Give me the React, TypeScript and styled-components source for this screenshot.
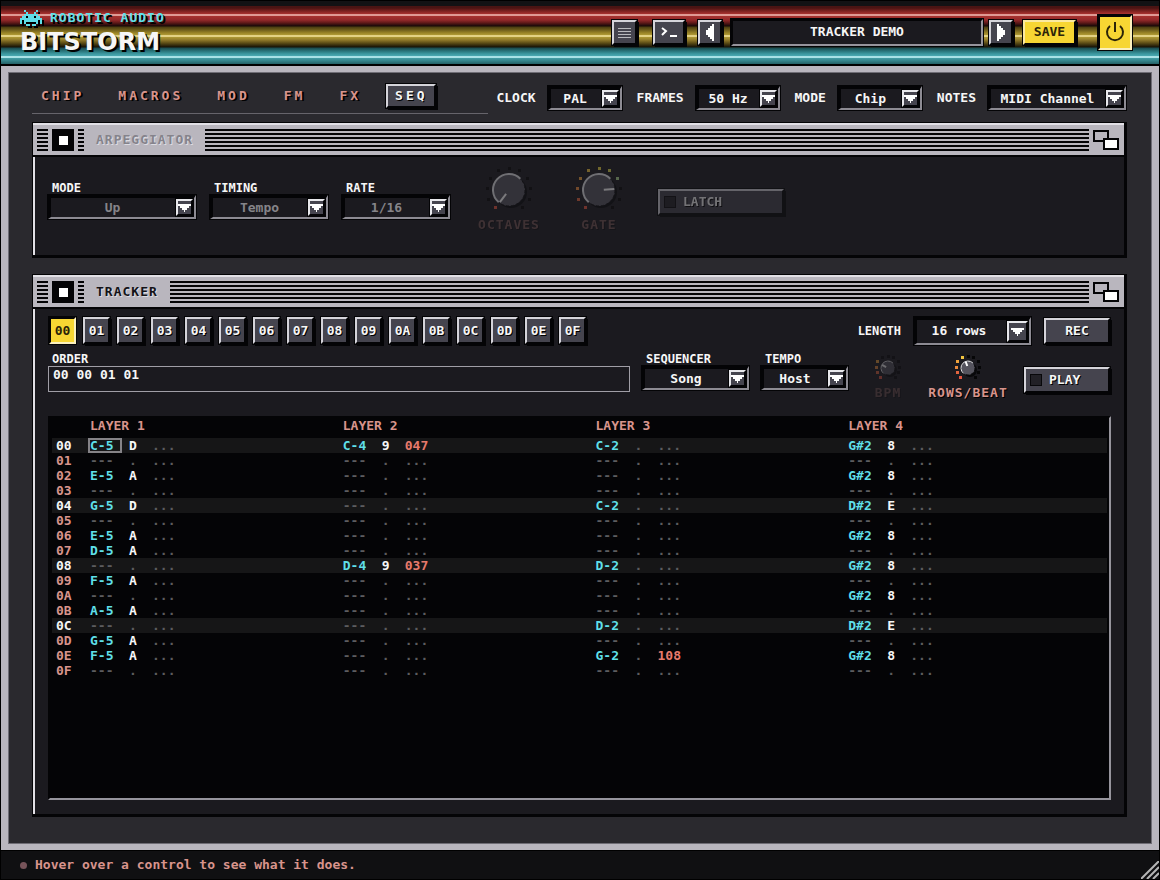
import React from "react";
import styled, { createGlobalStyle, css } from "styled-components";

const c = {
  black: "#040406",
  page: "#2a292e",
  panel: "#1b1a1f",
  chrome: "#b9b6be",
  chromeLight: "#e2e0e6",
  chromeDark: "#85838b",
  key: "#45444e",
  yellow: "#f7d633",
  pink: "#d8948c",
  cyan: "#5fdfe8",
  red: "#e77a6c",
  white: "#f6f6f6",
};

const GlobalStyle = createGlobalStyle`
  * { box-sizing: border-box; }
  html, body { margin: 0; background: #000; }
  body, button, select, textarea, input {
    font-family: "DejaVu Sans Mono", "Liberation Mono", monospace;
    font-weight: 700;
    font-size: 13px;
    line-height: 16px;
    color: ${c.white};
  }
`;

const Shell = styled.div`
  min-height: 100vh;
  display: flex;
  flex-direction: column;
  padding: 0 1px;
  background: #000;
`;

const Header = styled.header`
  height: 66px;
  display: flex;
  justify-content: space-between;
  padding: 0 27px 0 19px;
  border-bottom: 2px solid #000;
  background: linear-gradient(
    #000 0 1px, #121214 1px 6px,
    #4a1413 6px 8px, #6d1d1b 10px, #8c2725 12px, #a8322f 14px, #e09a94 14px 16px, #a8322f 16px, #93292a 20px, #5c1817 23px, #160808 26px,
    #4a3c10 27px, #6f5e1b 30px, #9b8527 33px, #b09a35 35px, #e3d183 35px 37px, #b09a35 37px, #90792a 40px, #5d4d16 43px, #171206 47px,
    #1a4b50 48px, #297479 51px, #3d9aa2 54px, #4aa9b1 56px, #a9e2e6 56px 58px, #459fa7 58px, #348288 61px, #246065 64px
  );
`;

const Brand = styled.div`
  display: flex;
  flex-direction: column;
  padding-top: 10px;
`;

const Maker = styled.div`
  display: flex;
  gap: 8px;
  height: 18px;
  color: ${c.cyan};
  letter-spacing: 1px;
  text-shadow: 2px 2px #000;

  svg { filter: drop-shadow(2px 2px #000); }
`;

const ProductName = styled.h1`
  margin: 0;
  font: 700 24px/28px "DejaVu Sans", "Liberation Sans", sans-serif;
  text-shadow: 2px 2px #000;
`;

const HeaderTools = styled.div`
  display: flex;
  align-items: center;
`;

const raised = css`
  border: 2px solid;
  border-color: #d5d4da ${c.black} ${c.black} #d5d4da;
  box-shadow: 0 0 0 1px ${c.black}, 2px 2px ${c.black};
  background: ${c.key};
  color: ${c.white};
  text-shadow: 1px 1px #000;
`;

const ToolKey = styled.button<{ $w: number; $gap?: number }>`
  ${raised}
  width: ${(p) => p.$w}px;
  height: 25px;
  margin-right: ${(p) => p.$gap ?? 6}px;
  padding: 0;
  display: flex;
  align-items: center;
  justify-content: center;
`;

const PresetName = styled.button`
  width: 252px;
  height: 27px;
  margin-right: 6px;
  padding: 0;
  border: 2px solid;
  border-color: ${c.black} #96949c #96949c ${c.black};
  box-shadow: 0 0 0 1px ${c.black};
  background: ${c.panel};
`;

const SaveKey = styled(ToolKey)`
  background: ${c.yellow};
  border-color: #fbe9a0 ${c.black} ${c.black} #fbe9a0;
  color: #2b2408;
  text-shadow: none;
`;

const PowerKey = styled.button`
  width: 34px;
  height: 35px;
  padding: 0;
  display: grid;
  place-items: center;
  border: 2px solid;
  border-color: ${c.black} #fbf0bd #fbf0bd ${c.black};
  box-shadow: 0 0 0 1px ${c.black};
  background: ${c.yellow};
`;

const Main = styled.main`
  flex: 1;
  display: flex;
  flex-direction: column;
  padding: 12px 25px 27px 24px;
  border: solid ${c.chrome};
  border-width: 6px 7px;
  box-shadow: inset 0 0 0 1px #6f6d75;
  background: ${c.page};
`;

const TopBar = styled.div`
  display: flex;
  justify-content: space-between;
  align-items: flex-start;
  height: 38px;
`;

const TabList = styled.nav`
  display: flex;
  align-items: flex-start;
  gap: 17px;
  width: 456px;
  height: 30px;
  border-bottom: 1px solid #66646b;
`;

const Tab = styled.button<{ $active?: boolean }>`
  padding: 2px 6px 4px 7px;
  height: 24px;
  border: 2px solid transparent;
  background: none;
  color: ${c.pink};
  letter-spacing: 3px;
  text-shadow: 2px 1px #000;
  ${(p) => p.$active && raised}
`;

const Settings = styled.div`
  display: flex;
  gap: 15px;
  padding: 2px 1px 0 0;
`;

const InlineField = styled.div`
  display: flex;
  align-items: center;
  gap: 12px;
`;

const Field = styled.div`
  display: flex;
  flex-direction: column;
`;

const Label = styled.label<{ $small?: boolean }>`
  font-size: ${(p) => (p.$small ? 12 : 13)}px;
  line-height: 14px;
`;

const FieldLabel = styled(Label)`
  padding-left: 4px;
`;

const SelectFrame = styled.div<{ $w: number; $tall?: boolean }>`
  display: grid;
  align-items: center;
  width: ${(p) => p.$w}px;
  height: ${(p) => (p.$tall ? 28 : 24)}px;
  border: solid;
  border-width: 3px 2px 2px 3px;
  border-color: ${c.black} #8d8b93 #8d8b93 ${c.black};
  box-shadow: 0 0 0 1px ${c.black};
  background: ${c.panel};

  > * { grid-area: 1 / 1; }
`;

const NativeSelect = styled.select<{ $dim?: boolean; $tall?: boolean }>`
  appearance: none;
  width: 100%;
  height: 100%;
  padding: 0 ${(p) => (p.$tall ? 28 : 20)}px 0 0;
  border: 0;
  background: transparent;
  opacity: 1;
  color: ${(p) => (p.$dim ? "#858489" : c.white)};
  text-align-last: center;
`;

const DropKey = styled.span<{ $tall?: boolean }>`
  justify-self: end;
  width: ${(p) => (p.$tall ? 21 : 17)}px;
  height: ${(p) => (p.$tall ? 21 : 17)}px;
  margin-right: 1px;
  display: grid;
  place-items: center;
  border: 2px solid;
  border-color: #e8e8ec ${c.black} ${c.black} #e8e8ec;
  box-shadow: 0 0 0 1px ${c.black};
  background: ${c.key};
  pointer-events: none;
`;

function Select({ id, value, w, tall, dim }: {
  id: string; value: string; w: number; tall?: boolean; dim?: boolean;
}) {
  return (
    <SelectFrame $w={w} $tall={tall}>
      <NativeSelect id={id} disabled={dim} $dim={dim} $tall={tall} defaultValue={value}>
        <option>{value}</option>
      </NativeSelect>
      <DropKey $tall={tall}>
        <svg width="13" height="13" viewBox="0 0 13 13" fill="#fff" shapeRendering="crispEdges">
          <path d="M0 3h13v2h-2v2h-2v2h-2v2H6V9H4V7H2V5H0z" />
        </svg>
      </DropKey>
    </SelectFrame>
  );
}

const Panel = styled.section<{ $grow?: boolean }>`
  display: flex;
  flex-direction: column;
  ${(p) => (p.$grow ? "flex: 1; margin-top: 16px;" : "height: 136px;")}
  border: solid;
  border-width: 1px 3px 3px 1px;
  border-color: ${c.black};
  background: ${c.panel};
`;

const TitleBar = styled.div`
  display: flex;
  align-items: center;
  gap: 4px;
  height: 34px;
  padding: 0 5px 0 4px;
  border-top: 2px solid ${c.chromeLight};
  border-bottom: 2px solid ${c.black};
  background: ${c.chrome};
`;

const Stripes = styled.span<{ $w?: number }>`
  ${(p) => (p.$w ? `width: ${p.$w}px;` : "flex: 1;")}
  height: 22px;
  background: repeating-linear-gradient(${c.black} 0 2px, ${c.chrome} 2px 4px);
`;

const CloseBox = styled.button`
  width: 22px;
  height: 22px;
  padding: 0;
  border: solid ${c.black};
  border-width: 7px 6px 6px 7px;
  background: #fff;
`;

const PanelTitle = styled.h2<{ $dim?: boolean }>`
  margin: 0;
  padding: 0 8px;
  font-size: 13px;
  line-height: 20px;
  letter-spacing: 1px;
  color: ${(p) => (p.$dim ? "#85838b" : "#141318")};
  text-shadow: 1px 1px #dddce2;
`;

const WindowKey = styled.button`
  width: 26px;
  height: 22px;
  padding: 0;
  border: 0;
  background: none;
`;

const PanelBody = styled.div`
  flex: 1;
  display: flex;
  flex-direction: column;
  padding: 7px 13px 14px;
  border-left: 2px solid ${c.chromeLight};
`;

function Bar({ title, dim }: { title: string; dim?: boolean }) {
  return (
    <TitleBar>
      <Stripes $w={11} />
      <CloseBox aria-label={`Toggle ${title}`} />
      <Stripes $w={6} />
      <PanelTitle $dim={dim}>{title}</PanelTitle>
      <Stripes />
      <WindowKey aria-label={`Resize ${title}`}>
        <svg width="26" height="22" viewBox="0 0 26 22" shapeRendering="crispEdges">
          <rect x="1" y="2" width="14" height="10" fill={c.chrome} stroke="#040406" strokeWidth="2" />
          <rect x="11" y="10" width="14" height="10" fill="#fff" stroke="#040406" strokeWidth="2" />
        </svg>
      </WindowKey>
    </TitleBar>
  );
}

const ArpRow = styled.div`
  display: flex;
  gap: 14px;
  padding-top: 17px;
  align-items: flex-start;
`;

const ArpKnobs = styled.div`
  display: flex;
  margin-top: -17px;
`;

const KnobBox = styled.div<{ $w: number; $opacity?: number }>`
  width: ${(p) => p.$w}px;
  display: flex;
  flex-direction: column;
  align-items: center;
  gap: 1px;
  opacity: ${(p) => p.$opacity ?? 1};
`;

const KnobLabel = styled.span<{ $faint?: boolean }>`
  line-height: 16px;
  letter-spacing: 1px;
  color: ${c.pink};
  opacity: ${(p) => (p.$faint ? 0.45 : 1)};
  text-shadow: 1px 1px #000;
`;

const dotColors = ["#e2553f", "#e2643f", "#ea8a3c", "#efa23c", "#f2c440", "#e5d040", "#d8d44a", "#a9d08a", "#7fc98f", "#6fc9b5", "#5fdfe8"];

function polar(r: number, deg: number, mid: number) {
  const a = (deg * Math.PI) / 180;
  return [mid + r * Math.sin(a), mid - r * Math.cos(a)];
}

function Knob({ size, r, dotR, dot, value, lit, unlit = "#060607" }: {
  size: number; r: number; dotR: number; dot: number; value: number; lit: number; unlit?: string;
}) {
  const m = size / 2;
  const [ax, ay] = polar(r, -140, m);
  const [bx, by] = polar(r, 45, m);
  const turn = value * 286 - 143;
  const [px, py] = polar(r * 0.3, turn, m);
  const [qx, qy] = polar(r * 0.95, turn, m);
  return (
    <svg width={size} height={size} viewBox={`0 0 ${size} ${size}`}>
      {dotColors.map((color, i) => {
        const [x, y] = polar(dotR, i * 28.6 - 143, m);
        return (
          <rect
            key={color}
            x={Math.round(x - dot / 2)}
            y={Math.round(y - dot / 2)}
            width={dot}
            height={dot}
            fill={i < lit ? color : unlit}
          />
        );
      })}
      <circle cx={m + 2} cy={m + 2} r={r} fill="#08080a" />
      <circle cx={m} cy={m} r={r} fill="#55545e" stroke="#0b0b0d" strokeDasharray="3 2" />
      <path d={`M${ax} ${ay}A${r} ${r} 0 1 1 ${bx} ${by}`} fill="none" stroke="#e4e4e8" strokeWidth={r > 10 ? 2 : 1} />
      <path d={`M${px} ${py}L${qx} ${qy}`} stroke="#fff" strokeWidth="2" />
    </svg>
  );
}

const Toggle = styled.label<{ $w: number; $dim?: boolean }>`
  ${raised}
  display: flex;
  align-items: center;
  gap: 7px;
  width: ${(p) => p.$w}px;
  height: 26px;
  padding-left: 4px;
  ${(p) => p.$dim && "opacity: 0.4;"}
`;

const TickBox = styled.input`
  appearance: none;
  width: 12px;
  height: 12px;
  margin: 0;
  border: 1px solid #08080a;
  background: #222126;
`;

const LatchSlot = styled.div`
  padding-top: 8px;
`;

const Row = styled.div`
  display: flex;
  justify-content: space-between;
`;

const PatternKeys = styled.div`
  display: flex;
  gap: 7px;
  padding: 1px;
`;

const PatternKey = styled.button<{ $active?: boolean }>`
  ${raised}
  width: 27px;
  height: 27px;
  padding: 0;
  ${(p) => p.$active && css`
    background: ${c.yellow};
    border-color: ${c.black} #fbf0bd #fbf0bd ${c.black};
    box-shadow: 0 0 0 1px ${c.black};
    color: #2b2408;
    text-shadow: none;
  `}
`;

const LengthTools = styled.div`
  display: flex;
  align-items: center;
  gap: 13px;
`;

const RecKey = styled.button`
  ${raised}
  width: 66px;
  height: 26px;
  margin-right: 1px;
  padding: 0;
`;

const OrderRow = styled.div`
  display: flex;
  gap: 12px;
  padding-top: 7px;
  height: 71px;
`;

const OrderField = styled(Field)`
  flex: 1;
`;

const OrderInput = styled.textarea`
  display: block;
  width: 100%;
  height: 26px;
  padding: 0 4px;
  resize: none;
  overflow: hidden;
  border: 1px solid #a09ea6;
  background: ${c.panel};
`;

const PlaySlot = styled.div`
  padding: 15px 1px 0 4px;
`;

const GridWell = styled.div`
  flex: 1;
  padding: 0 2px;
  border: 2px solid;
  border-color: ${c.black} #96949c #96949c ${c.black};
  background: ${c.black};
`;

const PatternTable = styled.table`
  width: 100%;
  table-layout: fixed;
  border-collapse: collapse;

  th, td { padding: 0; text-align: left; white-space: nowrap; line-height: 15px; height: 15px; }
  thead th { height: 20px; padding-left: 2px; vertical-align: top; color: ${c.pink}; }
`;

const Step = styled.tr<{ $beat: boolean }>`
  background: ${(p) => (p.$beat ? "#161617" : "transparent")};

  th { padding-left: 4px; color: ${(p) => (p.$beat ? c.white : c.pink)}; }
`;

const Cell = styled.td<{ $color: string; $empty: boolean; $cursor?: boolean }>`
  color: ${(p) => (p.$empty ? "#5c5c5f" : p.$color)};

  span {
    display: block;
    width: 34px;
    height: 15px;
    padding-left: 2px;
    line-height: 15px;
    ${(p) => p.$cursor && "outline: 2px solid #858387; outline-offset: -2px;"}
  }
`;

const Footer = styled.footer`
  display: flex;
  justify-content: space-between;
  align-items: center;
  height: 30px;
  padding-left: 19px;
  border: solid #000;
  border-width: 1px 0;
  background: #101012;
  color: ${c.pink};
`;

const Hint = styled.div`
  display: flex;
  align-items: center;
  gap: 8px;

  &::before { content: ""; width: 7px; height: 7px; border-radius: 50%; background: #77545a; }
`;

const Grip = styled.svg`
  align-self: flex-end;
`;

const invader = ["..#.....#..", "...#...#...", "..#######..", ".##.###.##.", "###########", "#.#######.#", "#.#.....#.#", "...##.##..."];

type Entry = [note?: string, instrument?: string, effect?: string];
const layers: Record<number, Entry>[] = [
  { 0: ["C-5", "D"], 2: ["E-5", "A"], 4: ["G-5", "D"], 6: ["E-5", "A"], 7: ["D-5", "A"], 9: ["F-5", "A"], 11: ["A-5", "A"], 13: ["G-5", "A"], 14: ["F-5", "A"] },
  { 0: ["C-4", "9", "047"], 8: ["D-4", "9", "037"] },
  { 0: ["C-2"], 4: ["C-2"], 8: ["D-2"], 12: ["D-2"], 14: ["G-2", undefined, "108"] },
  { 0: ["G#2", "8"], 2: ["G#2", "8"], 4: ["D#2", "E"], 6: ["G#2", "8"], 8: ["G#2", "8"], 10: ["G#2", "8"], 12: ["D#2", "E"], 14: ["G#2", "8"] },
];
const hex = Array.from({ length: 16 }, (_, i) => "0" + i.toString(16).toUpperCase());

const RowNumberCol = styled.col`width: 36px;`;
const NoteCol = styled.col`width: 39px;`;
const InstrumentCol = styled.col`width: 23px;`;
const EndCol = styled.col`width: 8px;`;

function Pattern() {
  return (
    <PatternTable>
      <colgroup>
        <RowNumberCol />
        {layers.map((_, i) => (
          <React.Fragment key={i}>
            <NoteCol />
            <InstrumentCol />
            <col />
          </React.Fragment>
        ))}
        <EndCol />
      </colgroup>
      <thead>
        <tr>
          <td />
          {layers.map((_, i) => <th key={i} colSpan={3}>LAYER {i + 1}</th>)}
          <td />
        </tr>
      </thead>
      <tbody>
        {hex.map((row, r) => (
          <Step key={row} $beat={r % 4 === 0}>
            <th scope="row">{row}</th>
            {layers.map((layer, i) => {
              const [note, inst, fx] = layer[r] ?? [];
              return (
                <React.Fragment key={i}>
                  <Cell $color={c.cyan} $empty={!note} $cursor={r === 0 && i === 0}><span>{note ?? "---"}</span></Cell>
                  <Cell $color={c.white} $empty={!inst}><span>{inst ?? "."}</span></Cell>
                  <Cell $color={c.red} $empty={!fx}><span>{fx ?? "..."}</span></Cell>
                </React.Fragment>
              );
            })}
            <td />
          </Step>
        ))}
      </tbody>
    </PatternTable>
  );
}

export default function App() {
  return (
    <Shell>
      <GlobalStyle />
      <Header>
        <Brand>
          <Maker>
            <svg width="22" height="16" viewBox="0 0 11 8" fill={c.cyan} shapeRendering="crispEdges">
              {invader.flatMap((line, y) => [...line].map((p, x) => p === "#" && <rect key={`${x}-${y}`} x={x} y={y} width="1" height="1" />))}
            </svg>
            <span>ROBOTIC AUDIO</span>
          </Maker>
          <ProductName>BITSTORM</ProductName>
        </Brand>
        <HeaderTools>
          <ToolKey $w={25} $gap={16} aria-label="Menu">
            <svg width="13" height="13" viewBox="0 0 13 13" fill="#b9b9bd" shapeRendering="crispEdges">
              <path d="M0 2h13v1H0zM0 5h13v1H0zM0 8h13v1H0zM0 11h13v1H0z" />
            </svg>
          </ToolKey>
          <ToolKey $w={32} $gap={13} aria-label="Console">
            <svg width="17" height="12" viewBox="0 0 17 12" fill="none" stroke="#fff" strokeWidth="2">
              <path d="M1 2l4 3-4 4M9 10h7" />
            </svg>
          </ToolKey>
          <ToolKey $w={24} $gap={9} aria-label="Previous preset">
            <svg width="8" height="17" viewBox="0 0 8 17" fill="#fff" shapeRendering="crispEdges">
              <path d="M8 0v17H6v-2H4v-2H2v-2H0V6h2V4h2V2h2V0z" />
            </svg>
          </ToolKey>
          <PresetName>TRACKER DEMO</PresetName>
          <ToolKey $w={24} $gap={10} aria-label="Next preset">
            <svg width="8" height="17" viewBox="0 0 8 17" fill="#fff" shapeRendering="crispEdges">
              <path d="M0 0v17h2v-2h2v-2h2v-2h2V6H6V4H4V2H2V0z" />
            </svg>
          </ToolKey>
          <SaveKey $w={53} $gap={22}>SAVE</SaveKey>
          <PowerKey aria-label="Power">
            <svg width="22" height="22" viewBox="0 0 22 22" fill="none" stroke="#2b2408" strokeWidth="2">
              <path d="M6 5a8 8 0 1 0 10 0M11 1v10" />
            </svg>
          </PowerKey>
        </HeaderTools>
      </Header>

      <Main>
        <TopBar>
          <TabList>
            {["CHIP", "MACROS", "MOD", "FM", "FX", "SEQ"].map((t) => <Tab key={t} $active={t === "SEQ"}>{t}</Tab>)}
          </TabList>
          <Settings>
            <InlineField><Label htmlFor="clock">CLOCK</Label><Select id="clock" value="PAL" w={74} /></InlineField>
            <InlineField><Label htmlFor="frames">FRAMES</Label><Select id="frames" value="50 Hz" w={84} /></InlineField>
            <InlineField><Label htmlFor="chipmode">MODE</Label><Select id="chipmode" value="Chip" w={84} /></InlineField>
            <InlineField><Label htmlFor="notes">NOTES</Label><Select id="notes" value="MIDI Channel" w={138} /></InlineField>
          </Settings>
        </TopBar>

        <Panel>
          <Bar title="ARPEGGIATOR" dim />
          <PanelBody>
            <ArpRow>
              <Field><FieldLabel $small htmlFor="arpmode">MODE</FieldLabel><Select id="arpmode" value="Up" w={148} dim /></Field>
              <Field><FieldLabel $small htmlFor="timing">TIMING</FieldLabel><Select id="timing" value="Tempo" w={118} dim /></Field>
              <Field><FieldLabel $small htmlFor="rate">RATE</FieldLabel><Select id="rate" value="1/16" w={108} dim /></Field>
              <ArpKnobs>
                <KnobBox $w={90} $opacity={0.42}>
                  <Knob size={52} r={16} dotR={22} dot={3} value={0} lit={1} />
                  <KnobLabel $faint>OCTAVES</KnobLabel>
                </KnobBox>
                <KnobBox $w={90} $opacity={0.42}>
                  <Knob size={52} r={16} dotR={22} dot={3} value={0.8} lit={8} />
                  <KnobLabel $faint>GATE</KnobLabel>
                </KnobBox>
              </ArpKnobs>
              <LatchSlot>
                <Toggle $w={126} $dim><TickBox type="checkbox" disabled />LATCH</Toggle>
              </LatchSlot>
            </ArpRow>
          </PanelBody>
        </Panel>

        <Panel $grow>
          <Bar title="TRACKER" />
          <PanelBody>
            <Row>
              <PatternKeys>
                {hex.map((h, i) => <PatternKey key={h} $active={i === 0}>{h}</PatternKey>)}
              </PatternKeys>
              <LengthTools>
                <Label $small htmlFor="length">LENGTH</Label>
                <Select id="length" value="16 rows" w={117} tall />
                <RecKey>REC</RecKey>
              </LengthTools>
            </Row>
            <OrderRow>
              <OrderField>
                <FieldLabel $small htmlFor="order">ORDER</FieldLabel>
                <OrderInput id="order" rows={1} defaultValue="00 00 01 01" spellCheck={false} />
              </OrderField>
              <Field><FieldLabel $small htmlFor="seq">SEQUENCER</FieldLabel><Select id="seq" value="Song" w={107} /></Field>
              <Field><FieldLabel $small htmlFor="tempo">TEMPO</FieldLabel><Select id="tempo" value="Host" w={87} /></Field>
              <Row>
                <KnobBox $w={56} $opacity={0.35}>
                  <Knob size={32} r={7} dotR={12} dot={3} value={0.28} lit={4} />
                  <KnobLabel $faint>BPM</KnobLabel>
                </KnobBox>
                <KnobBox $w={104}>
                  <Knob size={32} r={7} dotR={12} dot={3} value={0.43} lit={5} />
                  <KnobLabel>ROWS/BEAT</KnobLabel>
                </KnobBox>
                <PlaySlot>
                  <Toggle $w={86}><TickBox type="checkbox" />PLAY</Toggle>
                </PlaySlot>
              </Row>
            </OrderRow>
            <GridWell><Pattern /></GridWell>
          </PanelBody>
        </Panel>
      </Main>

      <Footer>
        <Hint>Hover over a control to see what it does.</Hint>
        <Grip width="18" height="18" viewBox="0 0 18 18" stroke="#b5b5b5" strokeWidth="2">
          <path d="M0 18L18 0M6 18L18 6M12 18l6-6" />
        </Grip>
      </Footer>
    </Shell>
  );
}
